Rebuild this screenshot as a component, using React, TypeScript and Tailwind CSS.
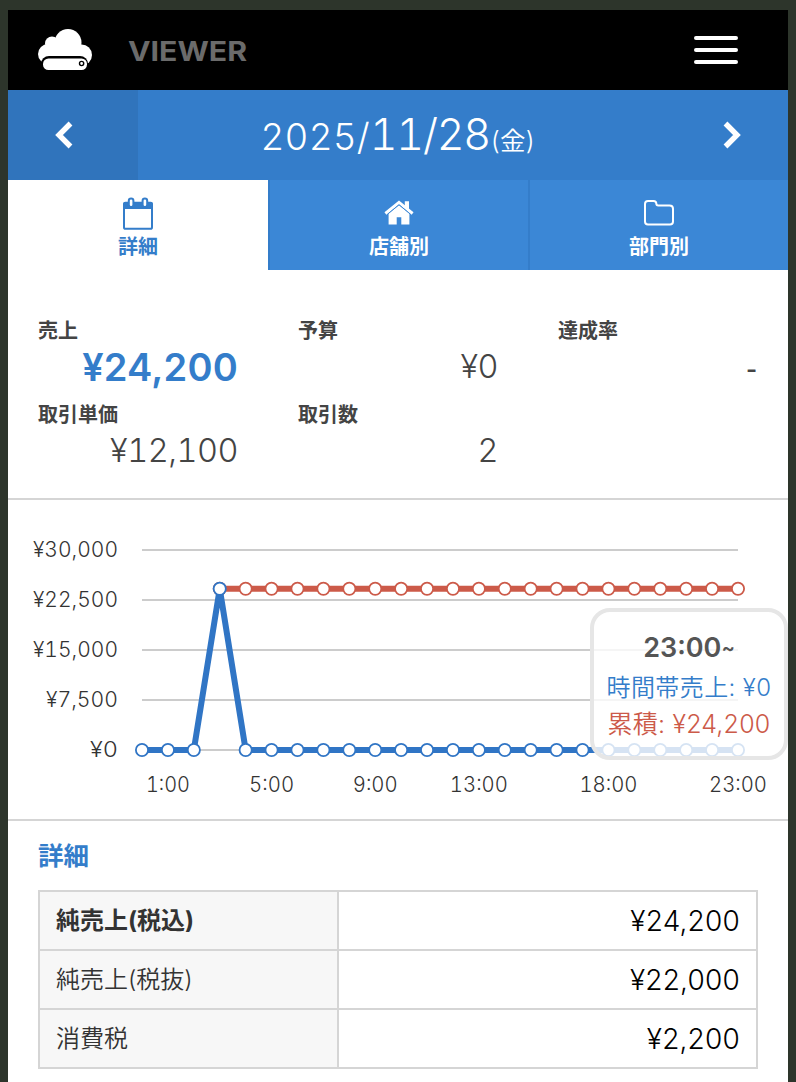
import React from 'react';

const HOURS = 24;
const LEFT = 134;
const RIGHT = 730;
const BASE = 250;
const PEAK = 88.7;
const xAt = (i: number) => LEFT + ((RIGHT - LEFT) * i) / (HOURS - 1);
const sales = Array.from({ length: HOURS }, (_, i) => ({ x: xAt(i), y: i === 3 ? PEAK : BASE }));
const total = Array.from({ length: HOURS - 3 }, (_, i) => ({ x: xAt(i + 3), y: PEAK }));
const toPoints = (pts: { x: number; y: number }[]) => pts.map((p) => `${p.x},${p.y}`).join(' ');

const yLabels = [
  { text: '¥30,000', y: 50, w: 85 },
  { text: '¥22,500', y: 100, w: 85 },
  { text: '¥15,000', y: 150, w: 85 },
  { text: '¥7,500', y: 200, w: 72 },
  { text: '¥0', y: 250, w: 28 },
];
const xLabels = [
  { text: '1:00', i: 1, w: 44 },
  { text: '5:00', i: 5, w: 45 },
  { text: '9:00', i: 9, w: 45 },
  { text: '13:00', i: 13, w: 58 },
  { text: '18:00', i: 18, w: 58 },
  { text: '23:00', i: 23, w: 58 },
];

function CloudLogo() {
  return (
    <svg width="56" height="44" viewBox="0 0 56 44" className="block">
      <g fill="#fff">
        <circle cx="31" cy="14.5" r="13.5" />
        <circle cx="15" cy="15.5" r="7" />
        <circle cx="11" cy="26" r="10" />
        <circle cx="44.5" cy="27" r="10.5" />
        <rect x="10" y="14" width="34" height="18" />
      </g>
      <rect x="4" y="28" width="47" height="22" rx="8" fill="#000" />
      <rect x="6" y="30.5" width="44" height="11.5" rx="5.5" fill="#fff" />
      <circle cx="44.6" cy="35.5" r="2.1" fill="none" stroke="#000" strokeWidth="1.4" />
    </svg>
  );
}

function Chevron({ d }: { d: string }) {
  return (
    <svg width="20" height="28" viewBox="0 0 20 28" className="block">
      <path d={d} fill="none" stroke="#fff" strokeWidth="5.4" strokeLinejoin="miter" />
    </svg>
  );
}

function CalendarIcon() {
  return (
    <svg width="32" height="34" viewBox="0 0 32 34" className="block">
      <rect x="2" y="6" width="28" height="25.8" rx="1.6" fill="none" stroke="#347dca" strokeWidth="2" />
      <path d="M1 11.9V7.2Q1 4.8 3.3 4.8H28.7Q31 4.8 31 7.2V11.9Z" fill="#347dca" />
      <rect x="6.8" y="1.4" width="4.6" height="8.6" rx="2.3" fill="#fff" stroke="#347dca" strokeWidth="2" />
      <rect x="20.6" y="1.4" width="4.6" height="8.6" rx="2.3" fill="#fff" stroke="#347dca" strokeWidth="2" />
    </svg>
  );
}

function HomeIcon() {
  return (
    <svg width="30" height="26" viewBox="0 0 30 26" className="block">
      <path d="M1.4 13.5 15 2.4 28.6 13.5" fill="none" stroke="#fff" strokeWidth="3" />
      <path d="M20.8 1.2h4.2v9l-4.2-3.5Z" fill="#fff" />
      <path d="M4.6 13.6 15 5 25.4 13.6V24.4H17.3V17.2H12.7V24.4H4.6Z" fill="#fff" />
      <path d="M3.6 14.2 15 4.8 26.4 14.2" fill="none" stroke="#3b87d6" strokeWidth="1" />
    </svg>
  );
}

function FolderIcon() {
  return (
    <svg width="32" height="28" viewBox="0 0 32 28" className="block">
      <path
        d="M2 5Q2 2 5 2H10.5Q13.3 2 13.3 4.5Q13.3 6.5 15.3 6.5H26.5Q30 6.5 30 9.8V22.6Q30 25.6 27 25.6H5Q2 25.6 2 22.6Z"
        fill="none"
        stroke="#fff"
        strokeWidth="2"
      />
    </svg>
  );
}

function Stat({ label, value, primary = false }: { label: string; value: string; primary?: boolean }) {
  return (
    <div className="w-[260px] h-[84px] pr-[60px] text-[#444]">
      <div className="text-[20px] leading-[31px] h-[30px] font-semibold">{label}</div>
      {primary ? (
        <div className="h-[42px] leading-[42px] text-right text-[38px] tracking-[0.2px] font-semibold text-[#347dca] whitespace-nowrap">
          {value}
        </div>
      ) : value === '-' ? (
        <div className="h-[42px] leading-[45px] pr-px text-right font-['Liberation_Sans',sans-serif] text-[32px] whitespace-nowrap">
          {value}
        </div>
      ) : (
        <div className="h-[42px] leading-[42px] text-right text-[32.5px] tracking-[-0.5px] font-light tabular-nums whitespace-nowrap">
          {value}
        </div>
      )}
    </div>
  );
}

function Chart() {
  return (
    <div className="relative h-[319px]">
      <svg width="780" height="319" viewBox="0 0 780 319" className="block">
        {yLabels.map((l) => (
          <g key={l.text}>
            <line x1={LEFT} x2={RIGHT} y1={l.y} y2={l.y} stroke="#ccc" strokeWidth="2" />
            <text
              x={110 - l.w}
              y={l.y + 7}
              textLength={l.w}
              lengthAdjust="spacingAndGlyphs"
              className="text-[21.5px] font-light tabular-nums fill-[#333]"
            >
              {l.text}
            </text>
          </g>
        ))}
        {xLabels.map((l) => (
          <text
            key={l.text}
            x={xAt(l.i) - l.w / 2}
            y={292}
            textLength={l.w}
            lengthAdjust="spacingAndGlyphs"
            className="text-[21.5px] font-light tabular-nums fill-[#333]"
          >
            {l.text}
          </text>
        ))}
        <polyline points={toPoints(total)} fill="none" stroke="#cc5a49" strokeWidth="6" />
        {total.map((p) => (
          <circle key={p.x} cx={p.x} cy={p.y} r="6.1" fill="#fff" stroke="#cc5a49" strokeWidth="1.8" />
        ))}
        <polyline points={toPoints(sales)} fill="none" stroke="#3075c5" strokeWidth="6" strokeLinejoin="round" />
        {sales.map((p) => (
          <circle key={p.x} cx={p.x} cy={p.y} r="6.1" fill="#fff" stroke="#3075c5" strokeWidth="1.8" />
        ))}
      </svg>
      <div className="absolute left-[582px] top-[108px] w-[198px] h-[152px] rounded-[20px] border-4 border-[#e6e6e6] bg-white/80 pt-[17px] text-center whitespace-nowrap">
        <div className="h-[36px] leading-[38px] text-[27px] font-semibold text-[#555]">
          23:00<span className="relative -top-[2px] text-[20px]">~</span>
        </div>
        <div className="h-[38px] leading-[45px] text-[24px] tracking-[0.4px] font-[350] text-[#347dca]">時間帯売上: ¥0</div>
        <div className="h-[38px] leading-[42px] text-[25px] tracking-[0.2px] font-[350] text-[#cc5a49]">累積: ¥24,200</div>
      </div>
    </div>
  );
}

const rows = [
  { label: '純売上(税込)', value: '¥24,200', bold: true },
  { label: '純売上(税抜)', value: '¥22,000', bold: false },
  { label: '消費税', value: '¥2,200', bold: false },
];

export default function App() {
  return (
    <div className="w-[796px] h-[1082px] overflow-hidden bg-[#2d352b] pt-[10px] px-2 font-['Inter','Noto_Sans_CJK_JP',sans-serif]">
      <div className="w-[780px] h-[1072px] bg-white overflow-hidden">
        <header className="h-[80px] bg-black flex items-center justify-between pl-[29px] pr-[50px]">
          <div className="flex items-center">
            <CloudLogo />
            <span className="ml-[35px] mt-[2px] inline-block origin-left scale-x-[1.12] text-[27px] leading-none font-bold text-[#6b6b6b]">
              VIEWER
            </span>
          </div>
          <div className="flex flex-col gap-2">
            <span className="block w-11 h-1 rounded-sm bg-white" />
            <span className="block w-11 h-1 rounded-sm bg-white" />
            <span className="block w-11 h-1 rounded-sm bg-white" />
          </div>
        </header>

        <div className="h-[90px] bg-[#347dca] flex text-white">
          <button className="w-[130px] bg-[#3074bc] pl-[46px]">
            <Chevron d="M16.5 2.5 5 14 16.5 25.5" />
          </button>
          <div className="flex-1 flex items-baseline justify-center font-light tabular-nums whitespace-nowrap leading-[89px]">
            <span className="text-[37px] tracking-[0.1px]">2025/</span>
            <span className="text-[43px] tracking-[-1.2px]">11/28</span>
            <span className="text-[25.5px] font-[350]">(金)</span>
          </div>
          <button className="w-[130px] pl-[64px]">
            <Chevron d="M3.5 2.5 15 14 3.5 25.5" />
          </button>
        </div>

        <nav className="h-[90px] grid grid-cols-3 text-[20px] font-semibold">
          <div className="flex flex-col items-center bg-white text-[#347dca]">
            <div className="h-[52px] pt-[17px]"><CalendarIcon /></div>
            <span className="leading-[30px]">詳細</span>
          </div>
          <div className="flex flex-col items-center bg-[#3b87d6] border-l-2 border-[#347dca] text-white">
            <div className="h-[52px] pt-[20px]"><HomeIcon /></div>
            <span className="leading-[30px]">店舗別</span>
          </div>
          <div className="flex flex-col items-center bg-[#3b87d6] border-l-2 border-[#347dca] text-white">
            <div className="h-[52px] pt-[19px]"><FolderIcon /></div>
            <span className="leading-[30px]">部門別</span>
          </div>
        </nav>

        <section className="h-[230px] pt-[46px] pl-[30px] border-b-2 border-[#d5d5d5] flex flex-wrap content-start">
          <Stat label="売上" value="¥24,200" primary />
          <Stat label="予算" value="¥0" />
          <div className="w-[230px]"><Stat label="達成率" value="-" /></div>
          <Stat label="取引単価" value="¥12,100" />
          <Stat label="取引数" value="2" />
        </section>

        <Chart />

        <section className="border-t-2 border-[#d5d5d5] px-[30px]">
          <h2 className="h-[69px] pt-[17px] text-[25.5px] leading-[36px] font-semibold text-[#347dca]">詳細</h2>
          <table className="w-[720px] border-collapse table-fixed">
            <tbody>
              {rows.map((r) => (
                <tr key={r.label} className="h-[59px]">
                  <th
                    className={`w-[299px] border-2 border-[#d5d5d5] bg-[#f7f7f7] p-0 pl-[16px] text-left text-[24px] leading-[36px] text-[#333] ${
                      r.bold ? 'font-bold' : 'font-[350]'
                    }`}
                  >
                    {r.label}
                  </th>
                  <td className="border-2 border-[#d5d5d5] p-0 pr-[16px] text-right text-[28px] leading-[36px] tracking-[0.2px] font-light text-black">
                    {r.value}
                  </td>
                </tr>
              ))}
            </tbody>
          </table>
        </section>
      </div>
    </div>
  );
}
